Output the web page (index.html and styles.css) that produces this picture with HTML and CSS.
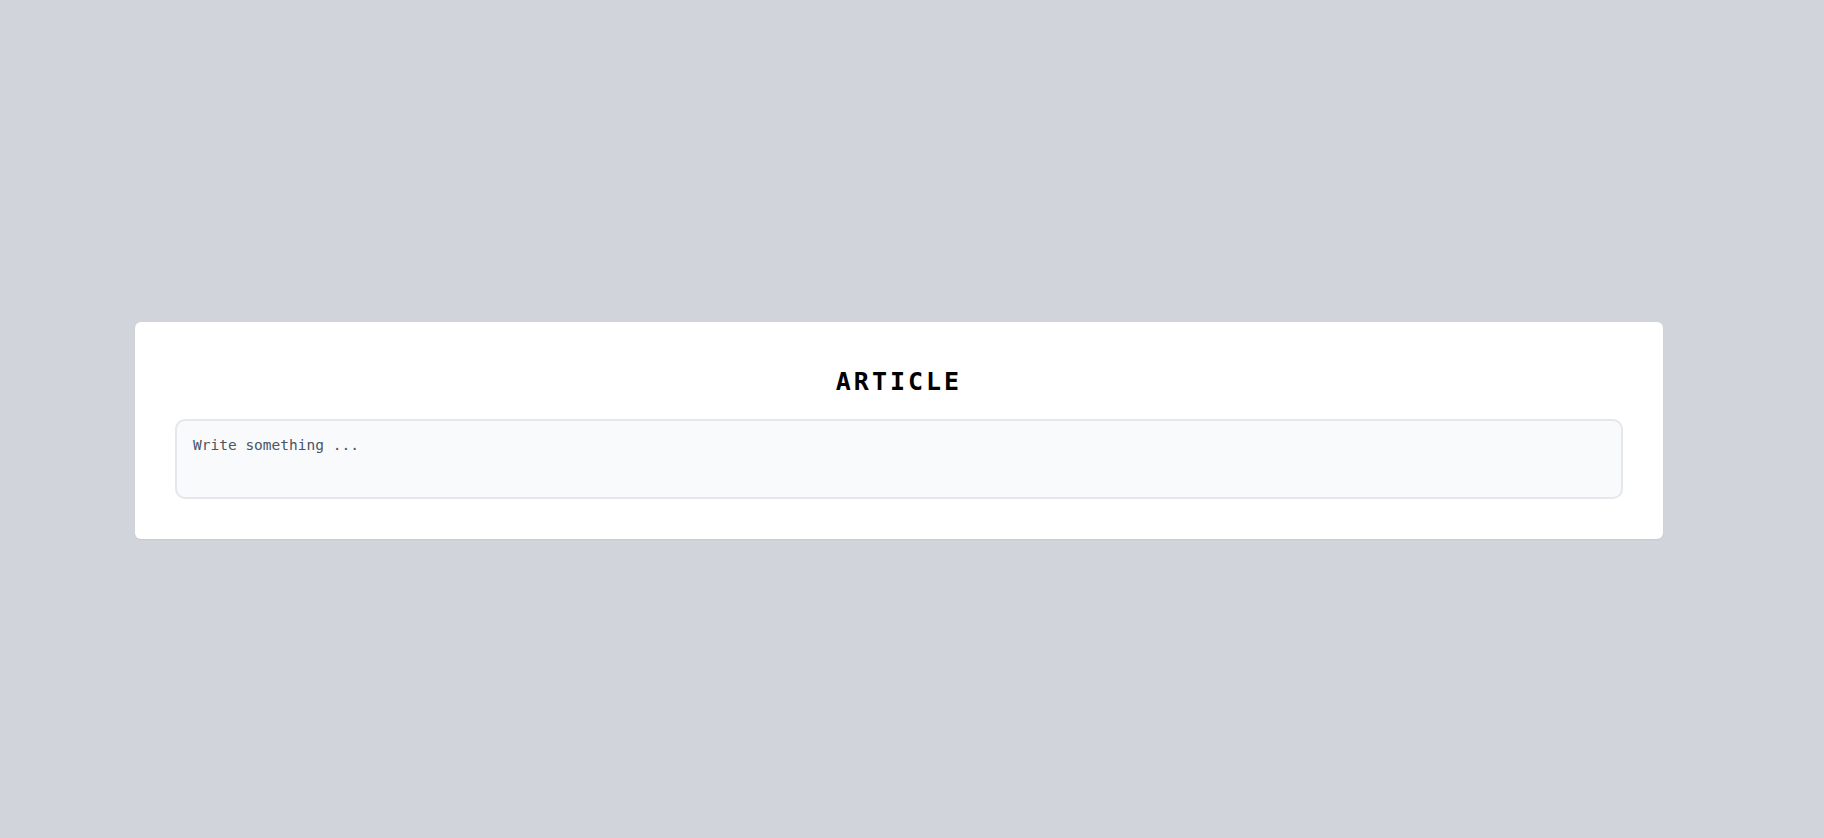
FILE: index.html
```html
<!DOCTYPE html>
<html lang="en">
<head>
<meta charset="utf-8">
<title>Article</title>
<link rel="stylesheet" href="styles.css">
</head>
<body>
<div class="page">
  <div class="card">
    <h1 class="title">ARTICLE</h1>
    <textarea class="editor" placeholder="Write something ..."></textarea>
  </div>
</div>
</body>
</html>
```

FILE: styles.css
```css
html, body {
  margin: 0;
  padding: 0;
  background: #d1d5db;
}
.page {
  box-sizing: border-box;
  min-height: 838px;
  display: flex;
  align-items: center;
  padding: 22px 161px 0 135px;
}
.card {
  box-sizing: border-box;
  width: 100%;
  background: #ffffff;
  border-radius: 6px;
  padding: 40px;
  box-shadow: 0 1px 2px rgba(0,0,0,0.06);
  display: flex;
  flex-direction: column;
}
.title {
  margin: 0 0 19px 0;
  padding-top: 2px;
  text-align: center;
  font-family: "DejaVu Sans Mono", "Liberation Mono", monospace;
  font-weight: 700;
  font-size: 25px;
  line-height: 36px;
  letter-spacing: 3px;
  color: #000000;
}
.editor {
  box-sizing: border-box;
  display: block;
  width: 100%;
  height: 80px;
  margin: 0;
  padding: 13px 16px;
  border: 2px solid #e5e7eb;
  border-radius: 10px;
  background: #f9fafb;
  resize: none;
  outline: none;
  font-family: "DejaVu Sans Mono", "Liberation Mono", monospace;
  font-size: 14.5px;
  line-height: 22px;
  color: #111827;
}
.editor::placeholder {
  color: #4b5563;
  opacity: 1;
}
```
